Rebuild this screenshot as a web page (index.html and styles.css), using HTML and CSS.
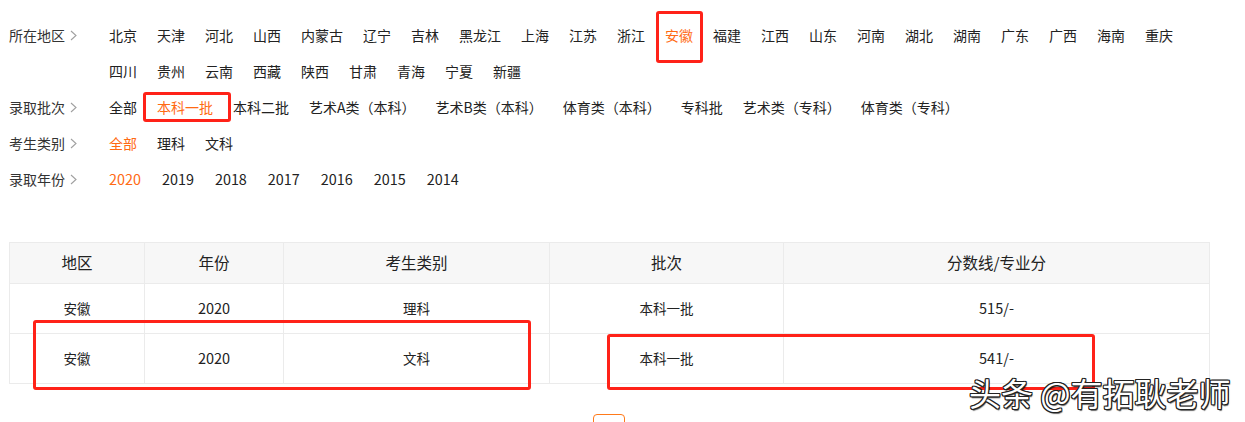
FILE: index.html
```html
<!DOCTYPE html>
<html lang="zh-CN">
<head>
<meta charset="utf-8">
<title>录取分数线</title>
<link rel="stylesheet" href="styles.css">
</head>
<body>
<div class="page">
  <div class="filters">
    <div class="filter-row">
      <div class="label">所在地区<svg class="chev" width="7" height="11" viewBox="0 0 7 11"><polyline points="1,1 6,5.5 1,10" fill="none" stroke="#a0a0a0" stroke-width="1.1"/></svg></div>
      <div class="items">
        <span class="item">北京</span><span class="item">天津</span><span class="item">河北</span><span class="item">山西</span><span class="item">内蒙古</span><span class="item">辽宁</span><span class="item">吉林</span><span class="item">黑龙江</span><span class="item">上海</span><span class="item">江苏</span><span class="item">浙江</span><span class="item active">安徽</span><span class="item">福建</span><span class="item">江西</span><span class="item">山东</span><span class="item">河南</span><span class="item">湖北</span><span class="item">湖南</span><span class="item">广东</span><span class="item">广西</span><span class="item">海南</span><span class="item">重庆</span><span class="item">四川</span><span class="item">贵州</span><span class="item">云南</span><span class="item">西藏</span><span class="item">陕西</span><span class="item">甘肃</span><span class="item">青海</span><span class="item">宁夏</span><span class="item">新疆</span>
      </div>
    </div>
    <div class="filter-row">
      <div class="label">录取批次<svg class="chev" width="7" height="11" viewBox="0 0 7 11"><polyline points="1,1 6,5.5 1,10" fill="none" stroke="#a0a0a0" stroke-width="1.1"/></svg></div>
      <div class="items">
        <span class="item">全部</span><span class="item active">本科一批</span><span class="item">本科二批</span><span class="item">艺术A类（本科）</span><span class="item">艺术B类（本科）</span><span class="item">体育类（本科）</span><span class="item">专科批</span><span class="item">艺术类（专科）</span><span class="item">体育类（专科）</span>
      </div>
    </div>
    <div class="filter-row">
      <div class="label">考生类别<svg class="chev" width="7" height="11" viewBox="0 0 7 11"><polyline points="1,1 6,5.5 1,10" fill="none" stroke="#a0a0a0" stroke-width="1.1"/></svg></div>
      <div class="items">
        <span class="item active">全部</span><span class="item">理科</span><span class="item">文科</span>
      </div>
    </div>
    <div class="filter-row">
      <div class="label">录取年份<svg class="chev" width="7" height="11" viewBox="0 0 7 11"><polyline points="1,1 6,5.5 1,10" fill="none" stroke="#a0a0a0" stroke-width="1.1"/></svg></div>
      <div class="items years">
        <span class="item active">2020</span><span class="item">2019</span><span class="item">2018</span><span class="item">2017</span><span class="item">2016</span><span class="item">2015</span><span class="item">2014</span>
      </div>
    </div>
  </div>

  <table class="scores">
    <colgroup>
      <col class="c1"><col class="c2"><col class="c3"><col class="c4"><col class="c5">
    </colgroup>
    <thead>
      <tr><th>地区</th><th>年份</th><th>考生类别</th><th>批次</th><th>分数线/专业分</th></tr>
    </thead>
    <tbody>
      <tr><td>安徽</td><td class="num">2020</td><td>理科</td><td>本科一批</td><td class="num">515/-</td></tr>
      <tr><td>安徽</td><td class="num">2020</td><td>文科</td><td>本科一批</td><td class="num">541/-</td></tr>
    </tbody>
  </table>

  <div class="pager"><span class="page-btn"></span></div>

  <div class="mark mark-province"></div>
  <div class="mark mark-batch"></div>
  <div class="mark mark-row-left"></div>
  <div class="mark mark-row-right"></div>

  <div class="watermark">头条 @有拓耿老师</div>
</div>
</body>
</html>
```

FILE: styles.css
```css
* { box-sizing: border-box; }
html, body { margin: 0; padding: 0; background: #fff; }
body {
  font-family: "Microsoft YaHei", "Noto Sans CJK SC", "Noto Sans", sans-serif;
  font-size: 14px;
  color: #333;
  overflow: hidden;
}
.page {
  position: relative;
  width: 1245px;
  height: 422px;
  overflow: hidden;
}
.filters {
  padding: 17px 0 0 9px;
}
.filter-row {
  display: flex;
  align-items: flex-start;
}
.label {
  width: 100px;
  flex: none;
  height: 36px;
  line-height: 36px;
  display: flex;
  align-items: center;
  color: #333;
}
.chev { margin-left: 5px; }
.items {
  display: flex;
  flex-wrap: wrap;
  column-gap: 20px;
  width: 1100px;
}
.item {
  line-height: 36px;
  height: 36px;
  white-space: nowrap;
  color: #222;
}
.item.active { color: #ff6a13; }
.years { column-gap: 21px; }
.years .item { font-size: 14.4px; }

.scores {
  margin: 45px 0 0 9px;
  width: 1200px;
  border-collapse: collapse;
  table-layout: fixed;
}
.c1 { width: 135px; }
.c2 { width: 139px; }
.c3 { width: 266px; }
.c4 { width: 234px; }
.c5 { width: 426px; }
.scores th, .scores td {
  border: 1px solid #ebebeb;
  text-align: center;
  padding: 0 0 2px;
  font-weight: normal;
}
.scores thead tr { height: 41px; }
.scores th {
  background: #f7f7f7;
  font-size: 15.5px;
  color: #222;
}
.scores tbody tr { height: 50px; }
.scores td { font-size: 13.5px; color: #222; }
.scores td.num { font-size: 14.5px; }

.pager {
  display: flex;
  justify-content: center;
  padding: 30px 0 0 9px;
  width: 1209px;
}
.page-btn {
  display: block;
  width: 32px;
  height: 32px;
  border: 1px solid #ff7a1a;
  border-radius: 4px;
}

.mark {
  position: absolute;
  border: 3px solid #ff2218;
  border-radius: 3px;
}
.mark-province { left: 656px; top: 11px; width: 47px; height: 52px; }
.mark-batch { left: 143px; top: 92px; width: 88px; height: 30px; }
.mark-row-left { left: 33px; top: 320px; width: 498px; height: 70px; }
.mark-row-right { left: 607px; top: 334px; width: 488px; height: 56px; }

.watermark {
  position: absolute;
  left: 969px;
  top: 376px;
  font-size: 32px;
  line-height: 32px;
  color: #fff;
  white-space: nowrap;
  text-shadow:
    -1px -1px 0 #222, 1px -1px 0 #222, -1px 1px 0 #222, 1px 1px 0 #222,
    0 1px 0 #222, 0 -1px 0 #222, 1px 0 0 #222, -1px 0 0 #222,
    1px 2px 1px rgba(0,0,0,0.6);
}
```
